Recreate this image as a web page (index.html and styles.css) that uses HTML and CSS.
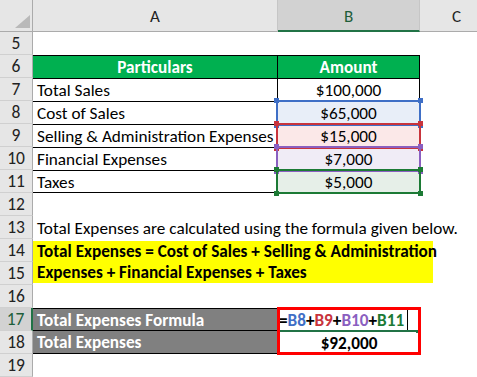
FILE: index.html
```html
<!DOCTYPE html>
<html>
<head>
<meta charset="utf-8">
<link rel="stylesheet" href="styles.css">
</head>
<body>
<div class="sheet">
  <div class="corner"><span class="tri"></span></div>
  <div class="colh">A</div>
  <div class="colh sel">B</div>
  <div class="colh">C</div>

  <div class="rh">5</div><div class="c"></div><div class="c"></div><div class="c"></div>

  <div class="rh">6</div>
  <div class="c t a head ctr">Particulars</div>
  <div class="c t b head ctr">Amount</div>
  <div class="c"></div>

  <div class="rh">7</div>
  <div class="c t a">Total Sales</div>
  <div class="c t b ctr">$100,000</div>
  <div class="c"></div>

  <div class="rh">8</div>
  <div class="c t a">Cost of Sales</div>
  <div class="c t b ctr fill-blue"><span class="ref ref-blue"><i class="k tl"></i><i class="k tr"></i><i class="k bl"></i><i class="k br"></i></span><span class="v">$65,000</span></div>
  <div class="c"></div>

  <div class="rh">9</div>
  <div class="c t a">Selling &amp; Administration Expenses</div>
  <div class="c t b ctr fill-red"><span class="ref ref-red"><i class="k tl"></i><i class="k tr"></i><i class="k bl"></i><i class="k br"></i></span><span class="v">$15,000</span></div>
  <div class="c"></div>

  <div class="rh">10</div>
  <div class="c t a">Financial Expenses</div>
  <div class="c t b ctr fill-purple"><span class="ref ref-purple"><i class="k tl"></i><i class="k tr"></i><i class="k bl"></i><i class="k br"></i></span><span class="v">$7,000</span></div>
  <div class="c"></div>

  <div class="rh">11</div>
  <div class="c t a last">Taxes</div>
  <div class="c t b ctr last fill-green"><span class="ref ref-green"><i class="k tl"></i><i class="k tr"></i><i class="k bl"></i><i class="k br"></i></span><span class="v">$5,000</span></div>
  <div class="c"></div>

  <div class="rh">12</div><div class="c"></div><div class="c"></div><div class="c"></div>

  <div class="rh">13</div>
  <div class="c wide">Total Expenses are calculated using the formula given below.</div>

  <div class="rh">14</div>
  <div class="c note">
    <div class="hl">
      <div class="hl-line">Total Expenses = Cost of Sales + Selling &amp; Administration</div>
      <div class="hl-line">Expenses + Financial Expenses + Taxes</div>
    </div>
  </div>
  <div class="rh">15</div>

  <div class="rh">16</div><div class="c"></div><div class="c"></div><div class="c"></div>

  <div class="rh sel-row">17</div>
  <div class="c gray g1">Total Expenses Formula</div>
  <div class="c active">
    <span class="frm">=<span class="r-blue">B8</span>+<span class="r-red">B9</span>+<span class="r-purple">B10</span>+<span class="r-green">B11</span></span><span class="caret"></span>
    <span class="uline"></span><span class="handle"></span>
    <span class="redbox"></span>
  </div>
  <div class="c"></div>

  <div class="rh">18</div>
  <div class="c gray g2">Total Expenses</div>
  <div class="c ctr bold total">$92,000</div>
  <div class="c"></div>

  <div class="rh">19</div><div class="c"></div><div class="c"></div><div class="c"></div>
</div>
</body>
</html>
```
FILE: styles.css
```css
html, body {
  margin: 0;
  padding: 0;
  background: #fff;
  overflow: hidden;
}
body {
  width: 477px;
  height: 377px;
  font-family: Carlito, Calibri, "Liberation Sans", sans-serif;
  font-size: 17.2px;
  color: #000;
}
.sheet {
  display: grid;
  grid-template-columns: 33px 245px 142px 74px;
  grid-template-rows: 32px repeat(15, 23px);
}
.corner {
  background: #e6e6e6;
  border-right: 1px solid #ababab;
  border-bottom: 1px solid #ababab;
  box-sizing: border-box;
  position: relative;
}
.tri {
  position: absolute;
  left: 15px;
  top: 15px;
  width: 0;
  height: 0;
  border-left: 15px solid transparent;
  border-bottom: 13px solid #b9b9b9;
}
.colh {
  background: #e6e6e6;
  border-bottom: 1px solid #ababab;
  border-right: 1px solid #c6c6c6;
  box-sizing: border-box;
  display: flex;
  align-items: center;
  justify-content: center;
  font-size: 17px;
  color: #222;
  padding-top: 2px;
}
.colh.sel {
  background: #d2d2d2;
  border-bottom: 2px solid #217346;
  color: #1e5e3a;
}
.rh {
  background: #e6e6e6;
  border-right: 1px solid #ababab;
  border-bottom: 1px solid #d0d0d0;
  box-sizing: border-box;
  display: flex;
  align-items: center;
  justify-content: center;
  font-size: 17.5px;
  color: #222;
}
.rh.sel-row {
  background: #d2d2d2;
  border-right: 2px solid #217346;
  color: #1e5e3a;
}
.c {
  box-sizing: border-box;
  display: flex;
  align-items: center;
  padding-left: 4px;
  padding-top: 1px;
  white-space: nowrap;
  position: relative;
}
.ctr {
  justify-content: center;
  padding-left: 0;
}
.bold { font-weight: bold; }
.t { border-top: 1px solid #000; }
.t.last { border-bottom: 1px solid #000; }
.a { border-right: 1px solid #000; }
.b { border-right: 1px solid #000; }
.head {
  background: #00b050;
  color: #fff;
  font-weight: bold;
}
.fill-blue { background: #e8eef8; }
.fill-red { background: #fbe8e8; }
.fill-purple { background: #f0ecf6; }
.fill-green { background: #e6efe8; }
.v { position: relative; }
.ref {
  position: absolute;
  left: -2px;
  top: -2px;
  right: -2px;
  bottom: -2px;
  border: 2px solid;
  z-index: 1;
}
.ref-blue { border-color: #3f6fc6; color: #3f6fc6; }
.ref-red { border-color: #c8343c; color: #c8343c; }
.ref-purple { border-color: #8a5fc0; color: #8a5fc0; }
.ref-green { border-color: #1c7a35; color: #1c7a35; }
.k {
  position: absolute;
  width: 5px;
  height: 5px;
  background: currentColor;
}
.k.tl { left: -4px; top: -4px; }
.k.tr { right: -4px; top: -4px; }
.k.bl { left: -4px; bottom: -4px; }
.k.br { right: -4px; bottom: -4px; }
.wide {
  grid-column: 2 / 5;
}
.note {
  grid-column: 2 / 5;
  grid-row: span 2;
  padding-left: 0;
  padding-top: 0;
  align-items: center;
}
.hl {
  background: #ffff00;
  width: 400px;
  height: 42px;
  padding-left: 4px;
  box-sizing: border-box;
  font-weight: bold;
  display: flex;
  flex-direction: column;
  justify-content: center;
}
.hl-line { height: 21px; line-height: 22px; }
.gray {
  background: #808080;
  color: #fff;
  font-weight: bold;
  border-right: 1px solid #000;
}
.g1 { border-top: 1px solid #000; border-bottom: 1px solid #000; }
.g2 { border-bottom: 1px solid #000; }
.active {
  padding-left: 1px;
  font-weight: bold;
}
.frm { position: relative; }
.r-blue { color: #3f6fc6; }
.r-red { color: #c8343c; }
.r-purple { color: #8a5fc0; }
.r-green { color: #1c7a35; }
.caret {
  display: inline-block;
  width: 1px;
  height: 20px;
  background: #000;
  margin-left: 3px;
}
.uline {
  position: absolute;
  left: 2px;
  right: 4px;
  bottom: -1px;
  height: 2px;
  background: #217346;
}
.handle {
  position: absolute;
  right: 1px;
  bottom: -2px;
  width: 3px;
  height: 3px;
  background: #217346;
}
.redbox {
  position: absolute;
  left: -1px;
  top: -1px;
  width: 144px;
  height: 48px;
  border: 3px solid #ff0000;
  box-sizing: border-box;
  z-index: 2;
}
```
